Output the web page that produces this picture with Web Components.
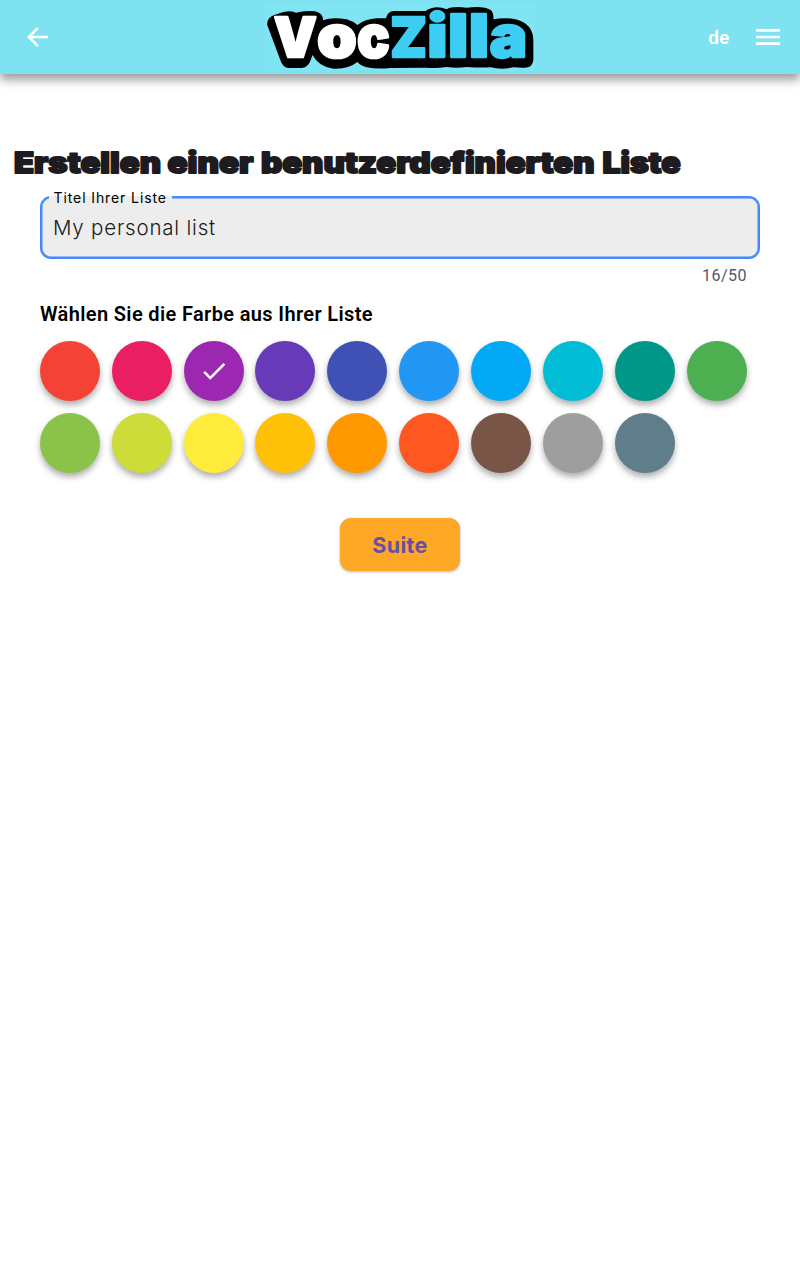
<!DOCTYPE html>
<html lang="de">
<head>
<meta charset="utf-8">
<title>VocZilla</title>
<style>
body{margin:0;background:#fff;font-family:Roboto,sans-serif}
</style>
</head>
<body>
<voc-page></voc-page>
<script>
const define = (name, html, setup) => customElements.define(name, class extends HTMLElement {
  constructor() {
    super();
    this.attachShadow({mode: 'open'}).innerHTML = html;
  }
  connectedCallback() { if (setup) setup(this, this.shadowRoot); }
});

define('voc-logo', `
<style>:host{display:block;width:300px;height:74px}svg{display:block}text{font-family:Inter,sans-serif;font-weight:900;stroke-linejoin:round}</style>
<svg width="300" height="74" viewBox="0 0 900 222" role="img">
<rect x="45" y="12" width="810" height="198" fill="#80e5f2"/>
<path d="M52 76Q49 52 75 44L100 36Q125 30 138 38Q165 30 195 34Q220 40 219 61Q245 50 290 58Q308 63 322 75Q345 57 380 55L408 55Q412 34 432 33L527 33Q555 14 590 28Q605 18 650 23Q700 16 722 30Q732 38 730 58Q790 48 825 70Q850 88 850 120V180Q848 205 820 203L790 202Q755 210 722 202Q690 204 650 201Q620 205 590 201Q560 206 527 203L420 204Q380 208 350 202Q330 196 322 186Q295 208 250 206Q205 200 188 165L180 185Q172 203 155 204L115 204Q100 202 93 185Z"/>
<g fill="#fff" stroke="#fff" stroke-width="8">
<text x="72" y="170" font-size="165" textLength="128" lengthAdjust="spacingAndGlyphs">V</text>
<text x="202" y="171" font-size="175" textLength="118" lengthAdjust="spacingAndGlyphs">o</text>
<text x="322" y="171" font-size="175" textLength="97" lengthAdjust="spacingAndGlyphs">c</text>
</g>
<g fill="#3dcdf2" stroke="#3dcdf2" stroke-width="7">
<text x="421" y="170" font-size="165" textLength="110" lengthAdjust="spacingAndGlyphs">Z</text>
<text x="532" y="171" font-size="176" textLength="61" lengthAdjust="spacingAndGlyphs">i</text>
<text x="594" y="171" font-size="179" textLength="61" lengthAdjust="spacingAndGlyphs">l</text>
<text x="656" y="171" font-size="179" textLength="61" lengthAdjust="spacingAndGlyphs">l</text>
<text x="719" y="171" font-size="175" textLength="112" lengthAdjust="spacingAndGlyphs">a</text>
</g></svg>`);

define('voc-header', `
<style>
:host{display:grid;grid-template-columns:250px 300px 250px;height:74px;background:#7ee2f0;box-shadow:0 6px 9px rgba(0,0,0,.38);align-items:center}
.back{padding-left:25px}.right{display:flex;align-items:center;justify-content:flex-end;gap:22.5px;padding-right:16px;color:#fff;font-weight:600;font-size:19px;letter-spacing:.2px}
svg{display:block}
</style>
<div class="back"><svg width="24" height="24" viewBox="0 0 24 24" fill="none" stroke="#fff" stroke-width="2.5"><path d="M23 12H4M13 2.8L3.8 12L13 21.2"/></svg></div>
<voc-logo></voc-logo>
<div class="right"><span>de</span><svg width="32" height="32" viewBox="0 0 32 32" fill="#fff"><path d="M4 8h24v2.67H4zM4 14.67h24v2.67H4zM4 21.33h24V24H4z"/></svg></div>`);

define('voc-heading', `
<style>:host{display:block;height:44px}svg{display:block;overflow:visible}h1{margin:0}text{font:900 28px Inter,sans-serif;fill:#1d1b20;stroke:#1d1b20;stroke-width:1.8;stroke-linejoin:round}</style>
<h1><svg width="668" height="44"></svg></h1>`,
(host, root) => {
  const words = [[0,147],[153.5,86],[247,333.5],[588.5,78]];
  root.querySelector('svg').innerHTML = host.getAttribute('text').split(' ').map((w, i) =>
    `<text x="${words[i][0]}" y="25" textLength="${words[i][1]}" lengthAdjust="spacingAndGlyphs">${w}</text>`).join('');
});

define('voc-field', `
<style>
:host{display:block}
.box{box-sizing:border-box;height:63px;border:2px solid #448aff;border-radius:11px;background:#ededed;box-shadow:inset 0 0 0 .5px #448aff;padding:0 11px;display:flex;align-items:center;position:relative}
.value{font:350 20.5px/28px Inter,sans-serif;letter-spacing:.8px;color:#1a1a1a;white-space:nowrap}
.label{position:absolute;left:7px;top:-9px;height:18px;padding:0 5px 0 4.5px;font:400 14px/18px Inter,sans-serif;letter-spacing:.9px;color:#000;white-space:nowrap;background:linear-gradient(#fff 0 7px,#ededed 7px)}
.count{padding:7px 13px 0 0;text-align:right;font:400 16px/19px Roboto,sans-serif;letter-spacing:.5px;color:#5a565f}
</style>
<div class="box"><span class="label"><slot name="label"></slot></span><span class="value"><slot></slot></span></div>
<div class="count"><slot name="count"></slot></div>`);

define('color-dot', `
<style>:host{display:flex;width:60px;height:60px;border-radius:50%;align-items:center;justify-content:center;box-shadow:0 4px 6px rgba(0,0,0,.32)}svg{display:none}:host([selected]) svg{display:block}</style>
<svg width="30" height="30" viewBox="0 0 24 24" fill="#fff"><path d="M9 16.17 4.83 12l-1.42 1.41L9 19 21 7l-1.41-1.41z"/></svg>`,
host => { host.style.background = host.getAttribute('color'); });

define('color-picker', `
<style>:host{display:block}h2{margin:0 0 15px;font:600 20px/24px Roboto,sans-serif;letter-spacing:.36px;color:#000;white-space:nowrap}.grid{display:grid;grid-template-columns:repeat(10,60px);gap:11.9px;margin-left:-.2px}</style>
<h2><slot></slot></h2><div class="grid"></div>`,
(host, root) => {
  const colors = '#f44336 #e91e63 #9c27b0 #673ab7 #3f51b5 #2196f3 #03a9f4 #00bcd4 #009688 #4caf50 #8bc34a #cddc39 #ffeb3b #ffc107 #ff9800 #ff5722 #795548 #9e9e9e #607d8b'.split(' ');
  root.querySelector('.grid').innerHTML = colors.map((c, i) => `<color-dot color="${c}"${i === 2 ? ' selected' : ''}></color-dot>`).join('');
});

define('voc-button', `
<style>:host{display:block}button{display:block;width:120px;height:53.5px;padding:0;border:0;border-radius:11px;background:#ffa726;box-shadow:0 1px 3px rgba(0,0,0,.3);color:#6750a4;font:700 21.5px/54px Inter,sans-serif;letter-spacing:.3px}</style>
<button><slot></slot></button>`);

define('voc-page', `
<style>
:host{display:block;min-height:1280px;background:#fff}
main{padding-top:74px}
voc-heading{margin-left:14px}
.form{padding:4px 40px 0}
color-picker{margin-top:17px}
.actions{display:flex;justify-content:center;margin-top:45px}
</style>
<voc-header></voc-header>
<main><voc-heading text="Erstellen einer benutzerdefinierten Liste"></voc-heading>
<div class="form"><voc-field><span slot="label">Titel Ihrer Liste</span>My personal list<span slot="count">16/50</span></voc-field>
<color-picker>Wählen Sie die Farbe aus Ihrer Liste</color-picker>
<div class="actions"><voc-button>Suite</voc-button></div></div></main>`);
</script>
</body>
</html>
